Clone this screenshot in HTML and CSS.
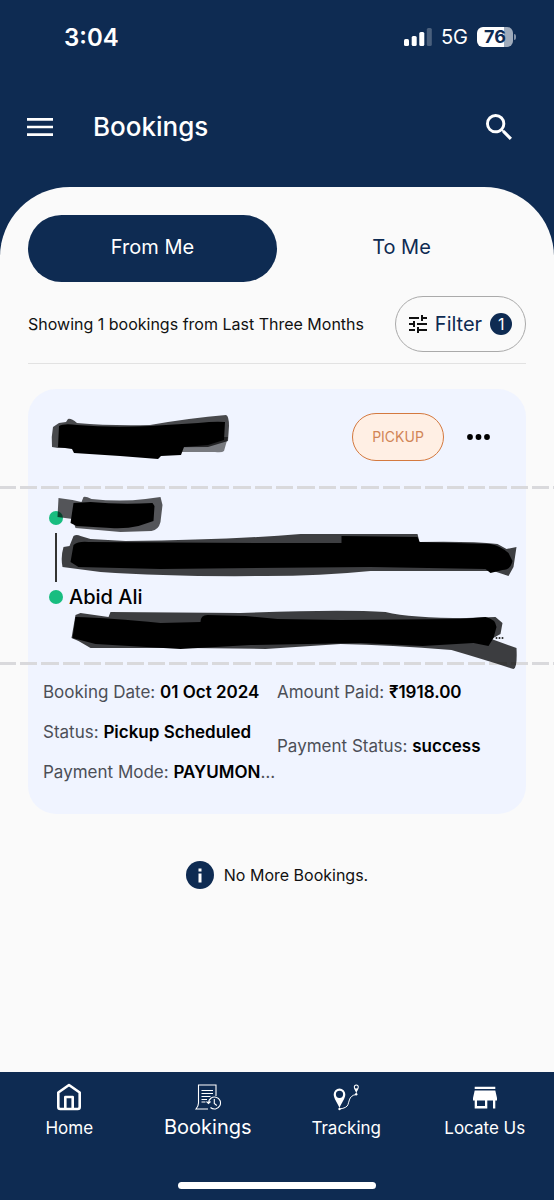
FILE: index.html
```html
<!DOCTYPE html>
<html lang="en">
<head>
<meta charset="utf-8">
<meta name="viewport" content="width=device-width, initial-scale=1">
<title>Bookings</title>
<link rel="stylesheet" href="styles.css">
</head>
<body>
<div class="app">
  <div class="status-bar">
    <span class="clock">3:04</span>
    <div class="status-icons">
      <svg class="signal" viewBox="0 0 28 18" aria-hidden="true">
        <rect x="0" y="11" width="5" height="7" rx="1.5"/><rect x="7.7" y="8" width="5" height="10" rx="1.5"/><rect x="15.3" y="4" width="5" height="14" rx="1.5"/><rect x="22.8" y="0" width="5" height="18" rx="1.5" opacity=".25"/>
      </svg>
      <span class="network">5G</span>
      <span class="battery"><span class="battery-body">76</span><span class="battery-tip"></span></span>
    </div>
  </div>

  <header class="top-bar">
    <button class="icon-button" type="button" aria-label="Menu">
      <svg class="menu-icon" viewBox="0 0 26 18" aria-hidden="true"><path d="M0 1.4h26M0 9h26M0 16.6h26" stroke="currentColor" stroke-width="2.7"/></svg>
    </button>
    <h1 class="title">Bookings</h1>
    <button class="icon-button" type="button" aria-label="Search">
      <svg class="search-icon" viewBox="3 3 17.5 17.5" aria-hidden="true"><path fill="currentColor" d="M15.5 14h-.79l-.28-.27A6.47 6.47 0 0 0 16 9.5 6.5 6.5 0 1 0 9.5 16c1.61 0 3.09-.59 4.23-1.57l.27.28v.79l5 4.99L20.49 19l-4.99-5zm-6 0C7.01 14 5 11.99 5 9.5S7.01 5 9.5 5 14 7.01 14 9.5 11.99 14 9.5 14z"/></svg>
    </button>
  </header>

  <main class="sheet">
    <div class="tabs">
      <button class="tab tab-active" type="button">From Me</button>
      <button class="tab" type="button">To Me</button>
    </div>

    <div class="summary">
      <p class="summary-text">Showing 1 bookings from Last Three Months</p>
      <button class="filter" type="button">
        <svg class="filter-icon" viewBox="3 3 18 18" aria-hidden="true"><path fill="currentColor" d="M3 17v2h6v-2H3zM3 5v2h10V5H3zm10 16v-2h8v-2h-8v-2h-2v6h2zM7 9v2H3v2h4v2h2V9H7zm14 4v-2H11v2h10zm-6-4h2V7h4V5h-4V3h-2v6z"/></svg>
        <span>Filter</span>
        <span class="count">1</span>
      </button>
    </div>

    <article class="card">
      <div class="card-head">
        <svg class="mark" viewBox="50 412 182 48" aria-hidden="true">
          <path opacity=".7" d="M53 426L59 422L66 421L68 418Q71 417 77 422Q110 425 150 424Q190 417 226 414Q229 415 229 425L228 440L208 446L58 447L52 446Q51 436 53 426Z"/>
          <path opacity=".5" d="M182 436L228 436L224 450Q222 452 215 451H182Z"/>
          <path d="M59 425Q64 422 77 424Q110 427 150 425L198 422Q216 420 225 421L224 439L208 444L184 446L181 454L161 455L158 458L120 455L74 452L72 448L58 446Z"/>
        </svg>
        <span class="badge">PICKUP</span>
        <button class="more" type="button" aria-label="More options">
          <svg class="more-icon" viewBox="0 0 23 6" aria-hidden="true"><circle cx="3" cy="3" r="2.9"/><circle cx="11.5" cy="3" r="2.9"/><circle cx="20" cy="3" r="2.9"/></svg>
        </button>
      </div>
      <div class="dashes"></div>
      <div class="route">
        <div class="stop"><span class="dot"></span></div>
        <div class="track"></div>
        <div class="stop"><span class="dot"></span><strong class="name">Abid Ali</strong></div>
        <svg class="route-marks" viewBox="28 489 497 173" aria-hidden="true">
          <path opacity=".65" d="M58 498L72 500L81 502L83 497Q85 496 91 499Q120 502 145 499L160 497L162 505L160 522Q158 530 151 531L120 532L75 528L72 519L57 517Z"/>
          <path d="M73 503L90 502Q120 505 152 503L154 506L153 521L138 526Q125 529 110 528L76 526L70 523Z"/>
          <path opacity=".74" d="M63 547L69 546L73 536Q76 534 80 536L90 539L125 541Q230 540 300 534L417 534L419 542Q470 541 497 544L506 549L516 547L513 567L508 576L493 571L370 571Q320 576 265 576Q170 577 100 572L62 567Q60 557 63 547Z"/>
          <path d="M73 545Q78 541 88 542Q200 543 341 543L341 536L417 537L419 542L490 544Q500 546 508 553L512 561Q510 570 502 570L490 573L485 569L370 567L160 569L78 567L70 562Z"/>
          <path opacity=".75" d="M75 615L80 613L108 617L110 612L240 613Q340 609 385 612Q410 618 466 618L495 617L502 623L500 634L491 639L516 648Q517 668 513 669Q485 660 451 650Q390 645 340 644L265 649L190 648L90 648L78 641L71 638Z"/>
          <path d="M75 617Q110 618 160 623L200 622Q200 615 207 615L245 616L277 619L340 620L460 619L485 617Q495 619 496 627L493 638L488 646L473 643L422 646L360 643L250 645L180 649L95 644L72 638Z"/>
          <g fill="#222"><circle cx="496" cy="638" r="1"/><circle cx="499" cy="638" r="1"/><circle cx="502" cy="638" r="1"/></g>
        </svg>
      </div>
      <div class="dashes"></div>
      <div class="details">
        <div class="details-col">
          <p class="fact">Booking Date: <strong>01 Oct 2024</strong></p>
          <p class="fact">Status: <strong>Pickup Scheduled</strong></p>
          <p class="fact">Payment Mode: <strong>PAYUMONEY</strong></p>
        </div>
        <div class="details-col details-col-spaced">
          <p class="fact">Amount Paid: <strong>₹1918.00</strong></p>
          <p class="fact">Payment Status: <strong>success</strong></p>
        </div>
      </div>
    </article>

    <p class="end-note">
      <svg class="info-icon" viewBox="0 0 28 28" aria-hidden="true"><circle cx="14" cy="14" r="14" fill="#0e2b52"/><path fill="#fff" d="M12.500 7.500h3v3h-3zM12.500 12.500h3v9h-3z"/></svg>
      <span>No More Bookings.</span>
    </p>
  </main>

  <footer class="bottom">
    <nav class="nav">
      <a class="nav-item" href="#home">
        <svg class="nav-icon" viewBox="0 0 26 28" fill="none" stroke="currentColor" stroke-width="2.600" stroke-linejoin="round" aria-hidden="true"><path d="M2.300 9.500L13 2L23.700 9.500V24Q23.700 26 21.700 26H4.300Q2.300 26 2.300 24Z"/><path d="M9.300 26V14H16.700V26"/></svg>
        <span>Home</span>
      </a>
      <a class="nav-item nav-current" href="#bookings" aria-current="page">
        <svg class="nav-icon" viewBox="0 0 26 28" fill="none" stroke="currentColor" stroke-width="1.100" aria-hidden="true"><path d="M3.500 20V2H21V13M3.500 20Q3.500 23 1 26H13M6.500 7.500h11.500M6.500 10.500h11.500M6.500 13.500h9M6.500 16.500h5.500M6.500 19h4"/><path d="M13.500 20A6 6 0 1 1 15.500 24.500M11.500 18.500L13.500 20.500L15.500 18.500M19.300 16v4.500l2.500 2"/></svg>
        <span>Bookings</span>
      </a>
      <a class="nav-item" href="#tracking">
        <svg class="nav-icon" viewBox="0 0 26 28" aria-hidden="true"><path fill="currentColor" fill-rule="evenodd" d="M6.500 5.500A5.800 5.800 0 0 0 .7 11.300C.7 16 4.500 19.500 6.500 25C8.500 19.500 12.300 16 12.300 11.300A5.800 5.800 0 0 0 6.500 5.500ZM6.500 7.700A3.600 3.600 0 1 1 6.500 14.900A3.600 3.600 0 1 1 6.500 7.700Z"/><path fill="currentColor" fill-rule="evenodd" d="M23.300 1.500A2.500 2.500 0 0 0 20.800 4C20.800 6 22.600 7.500 23.300 10.500C24 7.500 25.800 6 25.800 4A2.500 2.500 0 0 0 23.300 1.500ZM23.300 2.600A1.500 1.500 0 1 1 23.300 5.600A1.500 1.500 0 1 1 23.300 2.600Z"/><path d="M6.500 26Q14 25 15 21.500C16 18.500 16.500 15 18.500 13.500Q20 12 23 11.500" fill="none" stroke="currentColor"/><circle cx="6.500" cy="26" r="1.200" fill="currentColor"/><circle cx="23.200" cy="11.300" r="1.200" fill="currentColor"/></svg>
        <span>Tracking</span>
      </a>
      <a class="nav-item" href="#locate">
        <svg class="nav-icon" viewBox="0 0 26 28" fill="currentColor" aria-hidden="true"><path fill-rule="evenodd" d="M2.700 3.700H23.300V6H2.700ZM2.700 7.500H23.300L25 15V17.500H23.300V25.500H21V17.500H15.300V25.500H2.700V17.500H1V15ZM5 17.500V23H13V17.500Z"/></svg>
        <span>Locate Us</span>
      </a>
    </nav>
    <div class="home-indicator"></div>
  </footer>
</div>
</body>
</html>
```
FILE: styles.css
```css
* {
  box-sizing: border-box;
}

body {
  margin: 0;
  background: #0e2b52;
  color: #111;
  font-family: Inter, "Noto Sans", sans-serif;
  font-size: 16px;
}

h1,
p {
  margin: 0;
}

button {
  padding: 0;
  border: 0;
  background: none;
  color: inherit;
  font: inherit;
}

svg {
  display: block;
  flex: none;
}

.app {
  display: flex;
  flex-direction: column;
  min-height: 100vh;
}

.status-bar {
  display: flex;
  justify-content: space-between;
  align-items: center;
  height: 74px;
  padding: 0 38px 0 64px;
  color: #fff;
}

.clock {
  font-size: 24px;
  font-weight: 600;
}

.status-icons {
  display: flex;
  align-items: center;
  gap: 9px;
}

.signal {
  width: 28px;
  height: 18px;
  fill: #fff;
}

.network {
  font-size: 20px;
}

.battery {
  display: flex;
  align-items: center;
  gap: 1px;
}

.battery-body {
  width: 36px;
  border-radius: 6px;
  background: linear-gradient(90deg, #fff 76%, #9fabbb 76%);
  color: #0e2b52;
  font-size: 18px;
  font-weight: 700;
  line-height: 20px;
  text-align: center;
}

.battery-tip {
  width: 2px;
  height: 6px;
  border-radius: 0 2px 2px 0;
  background: #8492a7;
}

.top-bar {
  display: flex;
  align-items: center;
  height: 113px;
  padding: 0 42px 8px 27px;
  color: #fff;
}

.title {
  flex: 1;
  padding-left: 40px;
  font-size: 26px;
  font-weight: 500;
}

.menu-icon {
  width: 26px;
  height: 18px;
}

.search-icon {
  width: 26px;
  height: 26px;
}

.sheet {
  flex: 1;
  padding: 28px 28px 40px;
  border-radius: 70px 70px 0 0;
  background: #fafafa;
}

.tabs {
  display: grid;
  grid-template-columns: 1fr 1fr;
}

.tab {
  height: 67px;
  padding-bottom: 4px;
  border-radius: 34px;
  color: #0e2b52;
  font-size: 20px;
}

.tab-active {
  background: #0e2b52;
  color: #fff;
}

.summary {
  display: flex;
  justify-content: space-between;
  align-items: center;
  padding: 14px 0 11px;
  border-bottom: 1px solid #e2e2e2;
}

.filter {
  display: flex;
  align-items: center;
  justify-content: center;
  gap: 8px;
  width: 131px;
  height: 56px;
  border: 1px solid #aaa;
  border-radius: 28px;
  color: #0e2b52;
  font-size: 20px;
}

.filter-icon {
  width: 18px;
  height: 18px;
  color: #111;
}

.count {
  width: 22px;
  border-radius: 50%;
  background: #0e2b52;
  color: #fff;
  font-size: 16px;
  line-height: 22px;
}

.card {
  margin-top: 25px;
  padding-bottom: 22px;
  border-radius: 28px;
  background: #f0f4ff;
}

.card-head {
  display: flex;
  align-items: center;
  padding: 24px 36px 25px 22px;
}

.mark {
  width: 182px;
  height: 48px;
}

.badge {
  width: 92px;
  margin-left: auto;
  border: 1px solid #d4793f;
  border-radius: 24px;
  background: #ffefe4;
  color: #d18556;
  font-size: 14px;
  line-height: 46px;
  text-align: center;
}

.more {
  margin-left: 23px;
}

.more-icon {
  width: 23px;
  height: 6px;
}

/* The dashed rules run past the card to both edges of the window. */
.dashes {
  height: 3px;
  margin: 0 -28px;
  background: linear-gradient(90deg, #d9d9dc 16px, transparent 16px 20px, #d9d9dc 20px 37px, transparent 37px 41px, #d9d9dc 41px 59px, transparent 59px 63px, #d9d9dc 63px) 0 0 / 64px 3px repeat-x;
}

.route {
  position: relative;
  height: 173px;
  padding: 14px 21px;
}

.route-marks {
  position: absolute;
  inset: 0;
  width: 100%;
  height: 100%;
  overflow: visible;
}

.stop {
  display: flex;
  align-items: center;
  gap: 6px;
  height: 30px;
}

.dot {
  width: 14px;
  height: 14px;
  border-radius: 50%;
  background: #18bd80;
}

.name {
  color: #000;
  font-size: 20px;
  font-weight: 500;
}

.track {
  width: 2px;
  height: 49px;
  margin-left: 6px;
  background: #333;
}

.details {
  display: grid;
  grid-template-columns: 1fr 1fr;
  padding: 7px 15px 0;
}

.details-col {
  display: flex;
  flex-direction: column;
  min-width: 0;
}

.details-col-spaced {
  gap: 14px;
}

.fact {
  overflow: hidden;
  color: #4c4f57;
  font-size: 17px;
  line-height: 40px;
  text-overflow: ellipsis;
  white-space: nowrap;
}

.fact strong {
  color: #000;
  font-weight: 600;
}

.end-note {
  display: flex;
  align-items: center;
  justify-content: center;
  gap: 10px;
  padding-top: 47px;
}

.info-icon {
  width: 28px;
  height: 28px;
}

.bottom {
  display: flex;
  flex-direction: column;
  align-items: center;
  justify-content: space-between;
  height: 128px;
  padding: 11px 0;
  background: #0e2b52;
}

.nav {
  display: grid;
  grid-template-columns: repeat(4, 1fr);
  width: 100%;
}

.nav-item {
  display: flex;
  flex-direction: column;
  align-items: center;
  gap: 4px;
  color: #fff;
  font-size: 17px;
  line-height: 26px;
  text-decoration: none;
}

.nav-current {
  font-size: 20px;
  line-height: 24px;
}

.nav-icon {
  width: 26px;
  height: 28px;
}

.home-indicator {
  width: 198px;
  height: 7px;
  border-radius: 4px;
  background: #fff;
}
```
